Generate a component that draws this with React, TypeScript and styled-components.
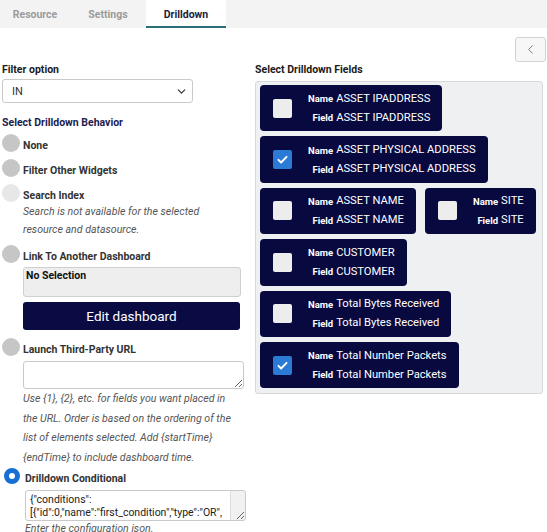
import React from "react";
import styled, { createGlobalStyle } from "styled-components";
import { ChevronDown, ChevronLeft } from "lucide-react";

const GlobalStyle = createGlobalStyle`
  html, body {
    margin: 0;
    padding: 0;
    background: #ffffff;
    font-family: Roboto, "Liberation Sans", Arial, sans-serif;
    color: #222;
  }
  * { box-sizing: border-box; }
`;

type RadioState = "off" | "disabled" | "on";

const behaviors: { label: string; state: RadioState }[] = [
  { label: "None", state: "off" },
  { label: "Filter Other Widgets", state: "off" },
];

const fields = [
  { name: "ASSET IPADDRESS", checked: false },
  { name: "ASSET PHYSICAL ADDRESS", checked: true },
  { name: "ASSET NAME", checked: false },
  { name: "SITE", checked: false },
  { name: "CUSTOMER", checked: false },
  { name: "Total Bytes Received", checked: false },
  { name: "Total Number Packets", checked: true },
];

const conditionJson =
  '{"conditions":\n[{"id":0,"name":"first_condition","type":"OR",\n"rules":[{"field":"SITE","operator":"=","value":"HQ"}]}]}';

const App = () => {
  return (
    <>
      <GlobalStyle />
      <TabBar>
        <Tab $width={70}>Resource</Tab>
        <Tab $width={76}>Settings</Tab>
        <Tab $width={80} $active>
          Drilldown
        </Tab>
      </TabBar>
      <Main>
        <Header>
          <BackButton>
            <ChevronLeft size={15} strokeWidth={1.4} />
          </BackButton>
        </Header>
        <Columns>
          <LeftColumn>
            <FieldLabel>Filter option</FieldLabel>
            <SelectBox>
              <span>IN</span>
              <ChevronDown size={13} strokeWidth={2.2} />
            </SelectBox>

            <SectionLabel>Select Drilldown Behavior</SectionLabel>
            <RadioList>
              {behaviors.map((b) => (
                <RadioRow key={b.label}>
                  <Radio $state={b.state} />
                  <RadioBody>
                    <RadioLabel>{b.label}</RadioLabel>
                  </RadioBody>
                </RadioRow>
              ))}

              <RadioRow>
                <Radio $state="disabled" />
                <RadioBody>
                  <RadioLabel>Search Index</RadioLabel>
                  <Help $lineHeight={18}>
                    Search is not available for the selected
                    <br />
                    resource and datasource.
                  </Help>
                </RadioBody>
              </RadioRow>

              <RadioRow>
                <Radio $state="off" />
                <RadioBody>
                  <RadioLabel>Link To Another Dashboard</RadioLabel>
                  <NoSelection>No Selection</NoSelection>
                  <EditButton>Edit dashboard</EditButton>
                </RadioBody>
              </RadioRow>

              <RadioRow>
                <Radio $state="off" />
                <RadioBody>
                  <RadioLabel>Launch Third-Party URL</RadioLabel>
                  <TextArea $height={28} defaultValue="" />
                  <Help $lineHeight={19.5} $trim={5}>
                    Use {"{1}"}, {"{2}"}, etc. for fields you want placed in
                    <br />
                    the URL. Order is based on the ordering of the
                    <br />
                    list of elements selected. Add {"{startTime}"}
                    <br />
                    {"{endTime}"} to include dashboard time.
                  </Help>
                </RadioBody>
              </RadioRow>

              <RadioRow>
                <Radio $state="on" />
                <RadioBody $top={4}>
                  <RadioLabel>Drilldown Conditional</RadioLabel>
                  <CodeArea $height={31} readOnly defaultValue={conditionJson} />
                  <Help $lineHeight={16}>Enter the configuration json.</Help>
                </RadioBody>
              </RadioRow>
            </RadioList>
          </LeftColumn>

          <RightColumn>
            <FieldLabel>Select Drilldown Fields</FieldLabel>
            <FieldsPanel>
              {fields.map((f) => (
                <Chip key={f.name}>
                  <CheckBox $checked={f.checked}>
                    {f.checked && (
                      <svg width="13" height="13" viewBox="0 0 16 16">
                        <path
                          d="M3 8.5l3.2 3.2L13 4.8"
                          fill="none"
                          stroke="#ffffff"
                          strokeWidth="2.4"
                          strokeLinecap="round"
                          strokeLinejoin="round"
                        />
                      </svg>
                    )}
                  </CheckBox>
                  <ChipGrid>
                    <ChipKey>Name</ChipKey>
                    <ChipValue>{f.name}</ChipValue>
                    <ChipKey>Field</ChipKey>
                    <ChipValue>{f.name}</ChipValue>
                  </ChipGrid>
                </Chip>
              ))}
            </FieldsPanel>
          </RightColumn>
        </Columns>
      </Main>
    </>
  );
};

const TabBar = styled.div`
  display: flex;
  height: 28px;
  background: #f3f3f3;
`;

const Tab = styled.div<{ $width: number; $active?: boolean }>`
  width: ${(p) => p.$width}px;
  display: flex;
  align-items: center;
  justify-content: center;
  font-size: 10.5px;
  font-weight: 700;
  color: ${(p) => (p.$active ? "#1d1d3d" : "#9b9b9b")};
  background: ${(p) => (p.$active ? "#ffffff" : "transparent")};
  border-bottom: 2px solid ${(p) => (p.$active ? "#2b6d78" : "transparent")};
  padding-top: 2px;
`;

const Main = styled.div`
  padding: 9px 1px 0 2px;
`;

const Header = styled.div`
  display: flex;
  justify-content: flex-end;
  height: 26px;
`;

const BackButton = styled.button`
  width: 31px;
  height: 25px;
  display: flex;
  align-items: center;
  justify-content: center;
  padding: 0;
  background: #f7f7f7;
  border: 1px solid #d2d2d2;
  border-radius: 3px;
  color: #6a6a6a;
`;

const Columns = styled.div`
  display: grid;
  grid-template-columns: 243px 288px;
  column-gap: 10px;
`;

const LeftColumn = styled.div`
  display: flex;
  flex-direction: column;
`;

const RightColumn = styled.div`
  display: flex;
  flex-direction: column;
`;

const FieldLabel = styled.div`
  font-size: 10.5px;
  font-weight: 700;
  line-height: 14px;
  color: #1a1a1a;
`;

const SelectBox = styled.div`
  margin-top: 2px;
  width: 191px;
  height: 24px;
  display: flex;
  align-items: center;
  justify-content: space-between;
  padding: 0 4px 0 9px;
  border: 1px solid #c9c9c9;
  border-radius: 3px;
  font-size: 11px;
  color: #333;
  background: #ffffff;
`;

const SectionLabel = styled.div`
  margin-top: 13px;
  font-size: 10.5px;
  font-weight: 700;
  line-height: 14px;
  color: #1c1c4e;
`;

const RadioList = styled.div`
  margin-top: 4px;
  display: flex;
  flex-direction: column;
  gap: 6px;
`;

const RadioRow = styled.div`
  display: flex;
  align-items: flex-start;
  gap: 3px;
`;

const Radio = styled.span<{ $state: RadioState }>`
  flex: none;
  width: ${(p) => (p.$state === "on" ? 16 : 18)}px;
  height: ${(p) => (p.$state === "on" ? 16 : 18)}px;
  margin: ${(p) => (p.$state === "on" ? "0 2px 0 2px" : "0")};
  border-radius: 50%;
  background: ${(p) =>
    p.$state === "on"
      ? "#ffffff"
      : p.$state === "disabled"
      ? "#e7e7e7"
      : "#c6c6c6"};
  border: ${(p) => (p.$state === "on" ? "5px solid #1670d2" : "none")};
`;

const RadioBody = styled.div<{ $top?: number }>`
  flex: 1;
  display: flex;
  flex-direction: column;
  padding-top: ${(p) => p.$top ?? 5}px;
`;

const RadioLabel = styled.div`
  font-size: 10.5px;
  font-weight: 700;
  line-height: 14px;
  color: #333;
`;

const Help = styled.div<{ $lineHeight: number; $trim?: number }>`
  font-size: 10.6px;
  font-style: italic;
  line-height: ${(p) => p.$lineHeight}px;
  color: #555;
  white-space: nowrap;
  margin-bottom: ${(p) => -(p.$trim ?? 0)}px;
`;

const NoSelection = styled.div`
  margin-top: 3px;
  width: 218px;
  height: 30px;
  padding: 1px 2px;
  background: #eeeeee;
  border: 1px solid #cfcfcf;
  border-radius: 3px;
  font-size: 10.5px;
  font-weight: 700;
  color: #111;
`;

const EditButton = styled.button`
  margin: 5px 0 2px;
  width: 217px;
  height: 28px;
  border: none;
  border-radius: 3px;
  background: #0b0b44;
  color: #ffffff;
  font-family: Roboto, "Liberation Sans", Arial, sans-serif;
  font-size: 13.5px;
`;

const TextArea = styled.textarea<{ $height: number }>`
  display: block;
  margin-top: 4px;
  width: 221px;
  height: ${(p) => p.$height}px;
  padding: 2px 4px;
  border: 1px solid #c9c9c9;
  border-radius: 3px;
  font-family: Roboto, "Liberation Sans", Arial, sans-serif;
  font-size: 10.5px;
  line-height: 13px;
  color: #222;
  resize: vertical;
`;

const CodeArea = styled(TextArea)`
  overflow: hidden;
  white-space: pre;
  padding-right: 18px;
  background-color: #ffffff;
  background-image: linear-gradient(
    to left,
    #f1f1f1 0px,
    #f1f1f1 14px,
    #dddddd 14px,
    #dddddd 15px,
    transparent 15px
  );
`;

const FieldsPanel = styled.div`
  margin-top: 4px;
  height: 313px;
  padding: 3px 4px;
  display: flex;
  flex-wrap: wrap;
  align-content: flex-start;
  gap: 5px 9px;
  background: #eef0f2;
  border: 1px solid #d6d8da;
  border-radius: 3px;
`;

const Chip = styled.div`
  height: 46.4px;
  display: flex;
  align-items: center;
  gap: 16px;
  padding: 0 12px 0 13px;
  background: #08093f;
  border-radius: 4px;
`;

const CheckBox = styled.span<{ $checked: boolean }>`
  flex: none;
  width: 19px;
  height: 19px;
  display: flex;
  align-items: center;
  justify-content: center;
  border-radius: 2px;
  background: ${(p) => (p.$checked ? "#2a7ad6" : "#ededed")};
`;

const ChipGrid = styled.div`
  display: grid;
  grid-template-columns: auto auto;
  column-gap: 3px;
  row-gap: 5px;
  align-items: center;
`;

const ChipKey = styled.span`
  justify-self: end;
  font-size: 9.5px;
  font-weight: 700;
  color: #ffffff;
`;

const ChipValue = styled.span`
  font-size: 11.2px;
  line-height: 14px;
  color: #ffffff;
  white-space: nowrap;
`;

export default App;
